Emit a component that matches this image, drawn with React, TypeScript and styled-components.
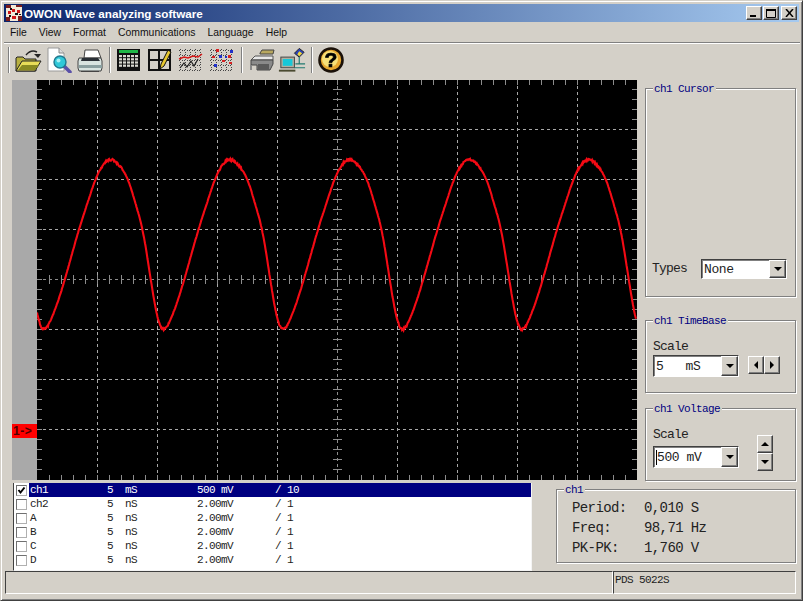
import React from 'react';
import styled, { createGlobalStyle, css } from 'styled-components';

const FACE = '#d4d0c8';
const MONO = '"Liberation Mono", monospace';

const GlobalStyle = createGlobalStyle`
  html, body {
    margin: 0;
    padding: 0;
    background: ${FACE};
  }
  * {
    box-sizing: border-box;
  }
`;

const raised = css`
  background: ${FACE};
  border: 1px solid;
  border-color: #fff #404040 #404040 #fff;
  box-shadow: inset -1px -1px 0 #808080;
`;

const sunken = css`
  border: 1px solid;
  border-color: #404040 #fff #fff #404040;
`;

const Window = styled.div`
  width: 803px;
  height: 601px;
  padding: 3px 5px 6px 3px;
  background: ${FACE};
  border: 1px solid;
  border-color: ${FACE} #404040 #404040 ${FACE};
  box-shadow: inset 1px 1px 0 #fff, inset -1px -1px 0 #808080;
  display: flex;
  flex-direction: column;
  overflow: hidden;
`;

const TitleBar = styled.div`
  height: 18px;
  margin-right: -2px;
  flex: none;
  display: flex;
  align-items: center;
  padding: 0 2px;
  background: linear-gradient(90deg, #0a246a, #a6caf0);
  color: #fff;
  font: bold 11.7px "Liberation Sans", sans-serif;
  white-space: nowrap;
`;

const TitleText = styled.span`
  flex: 1;
  margin-left: 2px;
`;

const CaptionButton = styled.div<{ $gap?: number }>`
  ${raised}
  width: 16px;
  height: 14px;
  margin-left: ${p => p.$gap ?? 0}px;
  display: flex;
  align-items: center;
  justify-content: center;
`;

const MenuBar = styled.div`
  height: 20px;
  flex: none;
  display: flex;
  align-items: center;
  padding-left: 6px;
  gap: 12px;
  font: 10.4px "Liberation Sans", sans-serif;
  color: #111;
`;

const Rule = styled.div`
  height: 2px;
  flex: none;
  margin-right: -3px;
  background: #808080;
  border-bottom: 1px solid #fff;
`;

const Toolbar = styled.div`
  height: 32px;
  flex: none;
  display: flex;
  align-items: center;
  padding-left: 4px;
`;

const ToolSep = styled.div`
  width: 2px;
  height: 26px;
  margin-right: 2px;
  border-left: 1px solid #808080;
  border-right: 1px solid #fff;
`;

const ToolGroup = styled.div`
  display: flex;
  margin-right: 4px;
`;

const ToolButton = styled.div`
  width: 31px;
  height: 26px;
  display: flex;
  align-items: center;
  justify-content: center;

  svg {
    filter: blur(0.35px);
  }
`;

const Workspace = styled.div`
  flex: none;
  height: 402px;
  margin-top: 4px;
  margin-left: 8px;
  display: flex;
`;

const ScopeFrame = styled.div`
  position: relative;
  width: 625px;
  height: 400px;
  flex: none;
  display: flex;
`;

const Strip = styled.div`
  width: 25px;
  background: #a9a9a9;
`;

const OffsetMark = styled.div`
  position: absolute;
  left: 0;
  top: 344px;
  width: 25px;
  height: 14px;
  padding-left: 1px;
  background: #ff0000;
  color: #4a0000;
  font: bold 12px/14px "Liberation Sans", sans-serif;
  letter-spacing: 0.6px;
`;

const SidePanel = styled.div`
  margin-left: 8px;
  width: 151px;
  display: flex;
  flex-direction: column;
`;

const Group = styled.div<{ $top: number; $height: number }>`
  position: relative;
  margin-top: ${p => p.$top}px;
  height: ${p => p.$height}px;
  flex: none;
  border: 1px solid #808080;
  box-shadow: 1px 1px 0 #fff, inset 1px 1px 0 #fff;
  display: flex;
  flex-direction: column;
`;

const Legend = styled.div`
  position: absolute;
  left: 7px;
  top: -6px;
  padding: 0 2px 0 1px;
  background: ${FACE};
  color: #000080;
  font: 11px/13px ${MONO};
  letter-spacing: -0.6px;
  white-space: pre;
`;

const MonoLabel = styled.div`
  font: 13px/16px ${MONO};
  letter-spacing: -0.8px;
  color: #222;
  white-space: pre;
`;

const MeasureText = styled.div`
  font: 14px/16px ${MONO};
  letter-spacing: -0.6px;
  color: #222;
  white-space: pre;
`;

const CursorBody = styled.div`
  margin-top: auto;
  padding: 0 8px 17px 6px;
  display: flex;
  align-items: center;
  justify-content: space-between;
`;

const ScaleBody = styled.div`
  padding: 18px 0 0 7px;
`;

const ScaleRow = styled.div`
  display: flex;
  align-items: center;
`;

const Combo = styled.div<{ $height: number }>`
  ${sunken}
  width: 86px;
  height: ${p => p.$height}px;
  background: #fff;
  display: flex;
  align-items: stretch;
  box-shadow: inset 1px 1px 0 #808080;
`;

const ComboValue = styled.div`
  flex: 1;
  padding-left: 2px;
  font: 13px ${MONO};
  letter-spacing: -0.4px;
  color: #222;
  white-space: pre;
  display: flex;
  align-items: center;
`;

const Caret = styled.span`
  width: 1px;
  height: 15px;
  background: #000;
`;

const ComboArrow = styled.div`
  ${raised}
  width: 17px;
  display: flex;
  align-items: center;
  justify-content: center;
`;

const Triangle = styled.span<{ $dir: 'up' | 'down' | 'left' | 'right' }>`
  width: 0;
  height: 0;
  border-style: solid;
  ${p =>
    p.$dir === 'down'
      ? 'border-width: 4px 4px 0; border-color: #000 transparent transparent;'
      : p.$dir === 'up'
      ? 'border-width: 0 4px 4px; border-color: transparent transparent #000;'
      : p.$dir === 'left'
      ? 'border-width: 4px 4px 4px 0; border-color: transparent #000 transparent transparent;'
      : 'border-width: 4px 0 4px 4px; border-color: transparent transparent transparent #000;'}
`;

const HSpin = styled.div`
  display: flex;
  margin-left: 9px;
  margin-top: -2px;
`;

const VSpin = styled.div`
  display: flex;
  flex-direction: column;
  margin-left: 18px;
  margin-top: -8px;
`;

const SpinButton = styled.div`
  ${raised}
  width: 16px;
  height: 18px;
  display: flex;
  align-items: center;
  justify-content: center;
`;

const BottomRow = styled.div`
  flex: none;
  height: 88px;
  margin-top: 1px;
  margin-left: 9px;
  display: flex;
  align-items: flex-start;
`;

const ChannelList = styled.div`
  width: 519px;
  height: 88px;
  flex: none;
  background: #fff;
  border-left: 1px solid #404040;
  border-right: 1px solid #f4f4f4;
  border-bottom: 1px solid #f4f4f4;
`;

const ChannelRow = styled.div`
  height: 14px;
  display: flex;
  align-items: center;
`;

const Check = styled.div`
  ${sunken}
  width: 11px;
  height: 11px;
  margin: 0 2px 0 2px;
  background: #fff;
  border-color: #707070 #b0b0b0 #b0b0b0 #707070;
  display: flex;
  align-items: center;
  justify-content: center;
`;

const ChannelCells = styled.div<{ $selected: boolean }>`
  flex: 1;
  height: 14px;
  padding-left: 1px;
  display: grid;
  grid-template-columns: 77px 18px 72px 78px 1fr;
  align-items: center;
  font: 11px/14px ${MONO};
  letter-spacing: -0.6px;
  white-space: pre;
  background: ${p => (p.$selected ? '#000080' : 'transparent')};
  color: ${p => (p.$selected ? '#fff' : '#222')};
`;

const MeasureBox = styled.div`
  position: relative;
  width: 240px;
  height: 74px;
  margin-top: 6px;
  margin-left: 24px;
  flex: none;
  border: 1px solid #808080;
  box-shadow: 1px 1px 0 #fff, inset 1px 1px 0 #fff;
  padding: 8px 0 0 15px;
  display: grid;
  grid-template-columns: 72px 1fr;
  grid-auto-rows: 20px;
  align-items: center;
`;

const StatusBar = styled.div`
  flex: none;
  height: 23px;
  margin-left: 1px;
  display: flex;
`;

const StatusPanel = styled.div<{ $width: number }>`
  ${sunken}
  width: ${p => p.$width}px;
  height: 23px;
  flex: none;
  padding-left: 1px;
  font: 11px/17px ${MONO};
  letter-spacing: -0.6px;
  color: #222;
`;

/* ---- drawings ---- */

const range = (from: number, to: number, step: number) => {
  const out: number[] = [];
  for (let v = from; v <= to; v += step) out.push(v);
  return out;
};

// one period of the trace, offset from the trough, taken off the picture
const SHAPE: [number, number][] = [
  [0, 332], [4, 327], [13, 305], [21, 279], [35, 229], [52, 177], [59, 164], [66, 158],
  [74, 163], [84, 178], [99, 229], [106.6, 279], [113, 318], [116, 328], [119.5, 332],
];

const shapeAt = (x: number) => {
  const dx = (((x - 44) % 119.5) + 119.5) % 119.5;
  for (let i = 1; i < SHAPE.length; i++) {
    if (dx <= SHAPE[i][0]) {
      const [x0, y0] = SHAPE[i - 1];
      const [x1, y1] = SHAPE[i];
      return y0 + ((y1 - y0) * (dx - x0)) / (x1 - x0);
    }
  }
  return 332;
};

const tracePoints = () => {
  let seed = 17;
  const pts: string[] = [];
  for (let x = 37; x <= 636; x += 0.5) {
    let y = 0;
    for (let k = -4; k <= 4; k++) y += shapeAt(x + k);
    y /= 9;
    seed = (seed * 1103 + 12345) % 65536;
    const extreme = y < 170 || y > 322 ? 2 : 0.7;
    y += (seed / 65536 - 0.5) * extreme;
    pts.push(`${(x - 37).toFixed(1)},${(y - 80).toFixed(1)}`);
  }
  return pts.join(' ');
};

const ScopeGrid: React.FC = () => (
  <svg width={600} height={400} style={{ display: 'block', background: '#000' }}>
    <g stroke="#a8a8a8" strokeWidth={1} strokeDasharray="3 3" shapeRendering="crispEdges">
      {range(60, 540, 60).filter(x => x !== 300).map(x => (
        <line key={x} x1={x} y1={0} x2={x} y2={400} />
      ))}
      {range(49.5, 349.5, 50).filter(y => y !== 199.5).map(y => (
        <line key={y} x1={0} y1={y} x2={600} y2={y} />
      ))}
    </g>
    <g stroke="#8c8c8c" strokeWidth={1} shapeRendering="crispEdges">
      <line x1={0} y1={199.5} x2={600} y2={199.5} strokeDasharray="3 3" />
      <line x1={300.5} y1={0} x2={300.5} y2={400} strokeDasharray="3 3" />
      {range(12, 588, 12).map(x => (
        <g key={x}>
          <line x1={x} y1={0} x2={x} y2={5} />
          <line x1={x} y1={395} x2={x} y2={400} />
          <line x1={x} y1={195} x2={x} y2={204} />
        </g>
      ))}
      {range(9.5, 389.5, 10).map(y => (
        <g key={y}>
          <line x1={0} y1={y} x2={5} y2={y} />
          <line x1={595} y1={y} x2={600} y2={y} />
          <line x1={296} y1={y} x2={305} y2={y} />
        </g>
      ))}
    </g>
    <polyline points={tracePoints()} fill="none" stroke="#f40a14" strokeWidth={2.1} />
  </svg>
);

const AppIcon = () => (
  <svg width={16} height={16} viewBox="0 0 16 16" style={{ flex: 'none' }}>
    <rect width={16} height={16} fill="#f2ead8" />
    <path d="M0 0h5v3H0zM10 0h6v2h-6zM0 12h4v4H0zM12 11h4v5h-4z" fill="#7a1c1c" />
    <path d="M6 4h3v3H6zM2 6h3v3H2zM11 5h3v3h-3zM6 11h4v3H6z" fill="#d01818" />
    <path d="M4 3h2v2H4zM9 8h3v2H9zM3 10h2v2H3zM13 9h2v1h-2z" fill="#111" />
  </svg>
);

const OpenIcon = () => (
  <svg width={28} height={26} viewBox="0 0 28 26">
    <path d="M2 11v13h20V12H11L9 10H3z" fill="#b8b040" stroke="#222" />
    <path d="M2 24l6-10h19l-6 10z" fill="#e8dc58" stroke="#222" />
    <path d="M4 23l4-5h17l-4 5z" fill="#8a8a22" />
    <path d="M12 8q5-6 11-3" fill="none" stroke="#222" strokeWidth={1.4} />
    <path d="M20 7h7l-3 4z" fill="#222" />
  </svg>
);

const PreviewIcon = () => (
  <svg width={28} height={26} viewBox="0 0 28 26">
    <path d="M3 1h11l5 5v18H3z" fill="#fff" stroke="#9a9a9a" />
    <path d="M14 1v5h5" fill="#dcdcdc" stroke="#888" />
    <path d="M19 19l6 6" stroke="#5a50a8" strokeWidth={3.5} strokeLinecap="round" />
    <circle cx={15} cy={15} r={6} fill="#30c8d8" stroke="#207a90" strokeWidth={1.4} />
    <circle cx={13.5} cy={13.5} r={2} fill="#a8f0f4" />
  </svg>
);

const PrintIcon = () => (
  <svg width={28} height={26} viewBox="0 0 28 26">
    <path d="M9 3h13l3 8H8z" fill="#fff" stroke="#444" />
    <path d="M3 11h22l1 3v7l-1 3H3l-1-3v-7z" fill="#d8e4e0" stroke="#444" />
    <path d="M6 11h16l2 3H5z" fill="#2a3036" />
    <path d="M3 18h23v3H3z" fill="#8aa0a0" />
    <path d="M5 24h18v1H5z" fill="#444" />
  </svg>
);

const TableIcon = () => (
  <svg width={28} height={26} viewBox="0 0 28 26">
    <rect x={2} y={2} width={23} height={22} fill="#111" />
    <rect x={4} y={3} width={19} height={3} fill="#20b848" />
    {range(4, 20, 4).map(x =>
      range(8, 20, 3.2).map(y => <rect key={`${x}-${y}`} x={x} y={y} width={3} height={2.2} fill="#d8d8d0" />)
    )}
  </svg>
);

const SplitIcon = () => (
  <svg width={28} height={26} viewBox="0 0 28 26">
    <rect x={3} y={3} width={21} height={20} fill="#d4d0c8" stroke="#111" strokeWidth={2} />
    <path d="M3 13h21M13 3v20" stroke="#111" strokeWidth={2} />
    <path d="M22 3l3 2-7 14-4 3 1-5z" fill="#e8c830" stroke="#111" />
  </svg>
);

const dots = (
  <g stroke="#444" strokeWidth={1} strokeDasharray="1 1.5" shapeRendering="crispEdges">
    {range(3, 23, 5).map(x => <line key={x} x1={x} y1={2} x2={x} y2={24} />)}
    {range(3, 24, 5).map(y => <line key={y} x1={2} y1={y} x2={25} y2={y} />)}
  </g>
);

const LineChartIcon = () => (
  <svg width={28} height={26} viewBox="0 0 28 26">
    {dots}
    <path d="M2 12l5-2 4 1 5-2 5 1 4-3" fill="none" stroke="#d81818" strokeWidth={1.4} />
    <path d="M3 21l4-5 3 4 4-6 3 5 4-7" fill="none" stroke="#222" strokeWidth={1.2} />
  </svg>
);

const ScatterIcon = () => (
  <svg width={28} height={26} viewBox="0 0 28 26">
    {dots}
    <g fill="#d82020">
      <rect x={8} y={2} width={3} height={3} />
      <rect x={4} y={9} width={3} height={2} />
      <rect x={14} y={13} width={3} height={2} />
      <rect x={20} y={8} width={3} height={3} />
      <rect x={21} y={15} width={3} height={2} />
    </g>
    <g fill="#2030c8">
      <rect x={11} y={8} width={3} height={3} />
      <rect x={22} y={3} width={3} height={3} />
      <rect x={6} y={17} width={3} height={3} />
      <rect x={17} y={9} width={2} height={2} />
    </g>
  </svg>
);

const DeviceIcon = () => (
  <svg width={28} height={26} viewBox="0 0 28 26">
    <path d="M13 6l2-3h12l-1 4H13z" fill="#b8a860" stroke="#444" />
    <path d="M4 13l4-4h18v4z" fill="#e8e8e8" stroke="#555" />
    <path d="M4 13h22v4l-3 6H10v-5H4z" fill="#8a8a8a" stroke="#444" />
    <path d="M11 17h11v6H11z" fill="#5a5a5a" />
    <path d="M4 18v5" stroke="#888" strokeWidth={2} />
  </svg>
);

const NetworkIcon = () => (
  <svg width={32} height={26} viewBox="0 0 32 26">
    <rect x={5} y={10} width={14} height={11} fill="#b0b0a0" stroke="#444" />
    <rect x={7} y={12} width={10} height={7} fill="#18c8d8" />
    <path d="M3 23h17v2H3z" fill="#4a4a30" />
    <path d="M24 1l5 4-5 5-5-4z" fill="#2840b8" stroke="#222" />
    <path d="M24 4l3 2-3 3-2-2z" fill="#f0d838" />
    <path d="M24 10v7M20 17h10M19 21h11" stroke="#207a70" strokeWidth={1.2} fill="none" />
  </svg>
);

const HelpIcon = () => (
  <svg width={28} height={26} viewBox="0 0 28 26">
    <circle cx={14} cy={13} r={11.5} fill="#e8a830" stroke="#1a1008" strokeWidth={2.6} />
    <circle cx={13} cy={12} r={8} fill="#f8e078" />
    <text x={14} y={20} textAnchor="middle" fontFamily="Liberation Sans" fontWeight="bold" fontSize={21} fill="#000" stroke="#000" strokeWidth={0.7}>?</text>
  </svg>
);

const toolGroups: React.FC[][] = [
  [OpenIcon, PreviewIcon, PrintIcon],
  [TableIcon, SplitIcon, LineChartIcon, ScatterIcon],
  [DeviceIcon, NetworkIcon],
  [HelpIcon],
];

const menuItems = ['File', 'View', 'Format', 'Communications', 'Language', 'Help'];

const channels = [
  { name: 'ch1', time: '5', unit: 'mS', volts: '500 mV', probe: '/ 10', checked: true },
  { name: 'ch2', time: '5', unit: 'nS', volts: '2.00mV', probe: '/ 1' },
  { name: 'A', time: '5', unit: 'nS', volts: '2.00mV', probe: '/ 1' },
  { name: 'B', time: '5', unit: 'nS', volts: '2.00mV', probe: '/ 1' },
  { name: 'C', time: '5', unit: 'nS', volts: '2.00mV', probe: '/ 1' },
  { name: 'D', time: '5', unit: 'nS', volts: '2.00mV', probe: '/ 1' },
];

const measures = [
  ['Period:', '0,010 S'],
  ['Freq:', '98,71 Hz'],
  ['PK-PK:', '1,760 V'],
];

const App: React.FC = () => (
  <>
    <GlobalStyle />
    <Window>
      <TitleBar>
        <AppIcon />
        <TitleText>OWON Wave analyzing software</TitleText>
        <CaptionButton>
          <svg width={8} height={8}><rect x={0} y={6} width={6} height={2} fill="#000" /></svg>
        </CaptionButton>
        <CaptionButton $gap={1}>
          <svg width={10} height={9}><path d="M0.5 1.5h9v7h-9z" fill="none" stroke="#000" /><rect width={10} height={2} fill="#000" /></svg>
        </CaptionButton>
        <CaptionButton $gap={2}>
          <svg width={9} height={8}><path d="M1 0l7 8M8 0L1 8" stroke="#000" strokeWidth={1.5} /></svg>
        </CaptionButton>
      </TitleBar>
      <MenuBar>
        {menuItems.map(item => <span key={item}>{item}</span>)}
      </MenuBar>
      <Rule />
      <Toolbar>
        {toolGroups.map((group, i) => (
          <React.Fragment key={i}>
            <ToolSep />
            <ToolGroup>
              {group.map((Icon, j) => (
                <ToolButton key={j}><Icon /></ToolButton>
              ))}
            </ToolGroup>
          </React.Fragment>
        ))}
      </Toolbar>
      <Workspace>
        <ScopeFrame>
          <Strip />
          <ScopeGrid />
          <OffsetMark>1-&gt;</OffsetMark>
        </ScopeFrame>
        <SidePanel>
          <Group $top={8} $height={209}>
            <Legend>ch1 Cursor</Legend>
            <CursorBody>
              <MonoLabel>Types</MonoLabel>
              <Combo $height={20}>
                <ComboValue>None</ComboValue>
                <ComboArrow><Triangle $dir="down" /></ComboArrow>
              </Combo>
            </CursorBody>
          </Group>
          <Group $top={23} $height={73}>
            <Legend>ch1 TimeBase</Legend>
            <ScaleBody>
              <MonoLabel>Scale</MonoLabel>
              <ScaleRow>
                <Combo $height={22}>
                  <ComboValue>5   mS</ComboValue>
                  <ComboArrow><Triangle $dir="down" /></ComboArrow>
                </Combo>
                <HSpin>
                  <SpinButton><Triangle $dir="left" /></SpinButton>
                  <SpinButton><Triangle $dir="right" /></SpinButton>
                </HSpin>
              </ScaleRow>
            </ScaleBody>
          </Group>
          <Group $top={15} $height={73}>
            <Legend>ch1 Voltage</Legend>
            <ScaleBody>
              <MonoLabel>Scale</MonoLabel>
              <ScaleRow>
                <Combo $height={22}>
                  <ComboValue><Caret />500 mV</ComboValue>
                  <ComboArrow><Triangle $dir="down" /></ComboArrow>
                </Combo>
                <VSpin>
                  <SpinButton><Triangle $dir="up" /></SpinButton>
                  <SpinButton><Triangle $dir="down" /></SpinButton>
                </VSpin>
              </ScaleRow>
            </ScaleBody>
          </Group>
        </SidePanel>
      </Workspace>
      <BottomRow>
        <ChannelList>
          {channels.map(ch => (
            <ChannelRow key={ch.name}>
              <Check>
                {ch.checked && (
                  <svg width={9} height={9}><path d="M1.5 4l2 2.5 4-5" fill="none" stroke="#000" strokeWidth={2} /></svg>
                )}
              </Check>
              <ChannelCells $selected={!!ch.checked}>
                <span>{ch.name}</span>
                <span>{ch.time}</span>
                <span>{ch.unit}</span>
                <span>{ch.volts}</span>
                <span>{ch.probe}</span>
              </ChannelCells>
            </ChannelRow>
          ))}
        </ChannelList>
        <MeasureBox>
          <Legend>ch1</Legend>
          {measures.map(([label, value]) => (
            <React.Fragment key={label}>
              <MeasureText>{label}</MeasureText>
              <MeasureText>{value}</MeasureText>
            </React.Fragment>
          ))}
        </MeasureBox>
      </BottomRow>
      <StatusBar>
        <StatusPanel $width={608} />
        <StatusPanel $width={183}>PDS 5022S</StatusPanel>
      </StatusBar>
    </Window>
  </>
);

export default App;
